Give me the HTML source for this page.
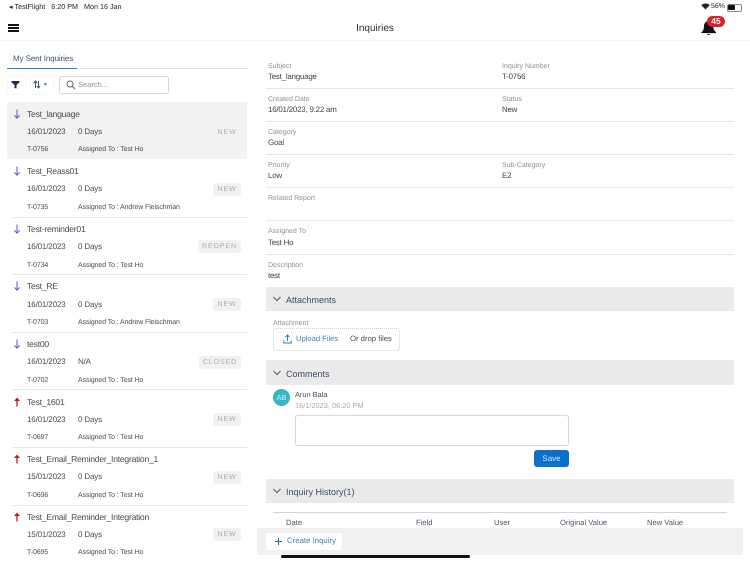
<!DOCTYPE html>
<html><head><meta charset="utf-8"><style>
html,body{margin:0;padding:0;background:#fff}
#p{position:relative;width:750px;height:562px;overflow:hidden;background:#fff;font-family:"Liberation Sans",sans-serif;color:#333;filter:blur(.3px);text-rendering:geometricPrecision}
#p div,#p span.a{position:absolute;white-space:nowrap}
.t{font-size:8.6px;line-height:12px;color:#4a4a4a;letter-spacing:-.24px}
.s{font-size:7px;line-height:10px;color:#4a4a4a;letter-spacing:-.1px;margin-top:.7px}
.d{font-size:8px;line-height:12px;color:#4a4a4a;letter-spacing:-.16px}
.l{font-size:7px;line-height:10px;color:#8e8e8e;margin-top:.5px}
.v{font-size:7.9px;line-height:12px;color:#444;letter-spacing:-.2px;margin-top:-.5px}
.hr{height:1px;background:#e6e6e6}
.b{background:#f1f1f1;border-radius:3px;height:13px;line-height:13px;font-size:7px;letter-spacing:.9px;color:#aaa;text-align:center}
.sec{left:266px;width:468px;background:#eaeaea}
.st{left:286px;font-size:9px;line-height:14px;color:#3a4a63;margin-top:1px}
.th{font-size:7.6px;line-height:10px;color:#4a5568;top:518px}
</style></head><body><div id="p">
<!-- status bar -->
<div style="left:9px;top:2px;font-size:7.2px;line-height:10px;color:#222">◂ TestFlight&nbsp;&nbsp; 6:20 PM&nbsp;&nbsp; Mon 16 Jan</div>
<svg style="position:absolute;left:701px;top:3px" width="9" height="7" viewBox="0 0 9 7"><path d="M4.5 6.5 L0.3 2.2 C2.6 0 6.4 0 8.7 2.2Z" fill="#222"/></svg>
<div style="left:711px;top:2px;font-size:7px;line-height:10px;color:#222">56%</div>
<div style="left:727px;top:4px;width:13px;height:6px;border:.5px solid #888;border-radius:2px"></div>
<div style="left:728px;top:5px;width:7px;height:5px;background:#111;border-radius:1px"></div>
<!-- header -->
<div style="left:8px;top:24px;width:11px;height:1.5px;background:#111"></div>
<div style="left:8px;top:27px;width:11px;height:1.5px;background:#111"></div>
<div style="left:8px;top:30px;width:11px;height:1.5px;background:#111"></div>
<div style="left:0;width:750px;top:27px;line-height:0;text-align:center"><span style="font-size:10px;line-height:0;color:#2e2e2e;">Inquiries</span></div>
<div style="left:0;top:40px;width:750px;height:1px;background:#f0f0f0"></div>
<svg style="position:absolute;left:700px;top:20px" width="18" height="16" viewBox="0 0 18 17"><path d="M1 13 C3.5 11 3.5 9 3.6 6.5 C3.8 3 6 1 8.5 1 C11 1 13.3 3 13.5 6.5 C13.6 9 14 11 16.5 13 L16.5 14 L1 14Z M6.8 15 H10.2 C10 16.4 7 16.4 6.8 15Z" fill="#111"/></svg>
<div style="left:707px;top:15.5px;width:18px;height:11.5px;border-radius:6px;background:#df1f26;color:#fff;font-size:8.5px;line-height:11.5px;font-weight:bold;text-align:center">45</div>
<!-- tabs -->
<div style="left:13px;top:52.5px;font-size:8px;line-height:12px;color:#3f5170;letter-spacing:-.1px">My Sent Inquiries</div>
<div style="left:7px;top:68px;width:241px;height:1px;background:#e4e4e4"></div>
<div style="left:7px;top:67.5px;width:70px;height:1.5px;background:#2f86c5"></div>
<!-- toolbar -->
<div style="left:7px;top:76px;width:17px;height:17px;border:.5px solid #f8f8f8;border-radius:2px"></div>
<div style="left:29px;top:76px;width:23px;height:17px;border:.5px solid #f8f8f8;border-radius:2px"></div>
<svg style="position:absolute;left:11px;top:80px" width="9" height="9" viewBox="0 0 9 9"><path d="M.5 1H8.5V2.2L5.5 5V8.5L3.5 8V5L.5 2.2Z" fill="#1f2f48"/></svg>
<svg style="position:absolute;left:33px;top:80px" width="14" height="9" viewBox="0 0 14 9"><path d="M2.5 8V1.5M.8 3L2.5 1L4.2 3M5.5 1V7.5M3.9 6L5.5 8L7.1 6" stroke="#3f5170" stroke-width="1" fill="none"/><path d="M10.5 3.5H14L12.2 5.5Z" fill="#3f5170"/></svg>
<div style="left:59px;top:76px;width:108px;height:16px;border:1px solid #d8d8d8;border-radius:3px"></div>
<svg style="position:absolute;left:66px;top:80px" width="10" height="10" viewBox="0 0 10 10"><circle cx="4" cy="4" r="3" stroke="#666" fill="none"/><path d="M6.2 6.2L9 9" stroke="#666" stroke-width="1.1"/></svg>
<div style="left:78px;top:79px;font-size:7.5px;line-height:11px;color:#8c8c8c">Search...</div>
<!-- list -->
<div style="left:7px;top:102px;width:240px;height:57px;background:#f2f2f2"></div>

<svg width="0" height="0" style="position:absolute"><defs><symbol id="dn" viewBox="0 0 8 10"><path d="M4 .5V9M1.4 6.4L4 9.2L6.6 6.4" stroke="#5b57c9" stroke-width="1" fill="none"/></symbol><symbol id="up" viewBox="0 0 8 10"><path d="M4 9.5V1.5" stroke="#c11920" stroke-width="1.3" fill="none"/><path d="M1 4L4 .6L7 4Z" fill="#c11920"/></symbol></defs></svg>

<svg style="position:absolute;left:13px;top:108.5px" width="8" height="10"><use href="#dn"/></svg>
<div class="t" style="left:27px;top:108px">Test_language</div>
<div class="d" style="left:27px;top:126px">16/01/2023</div><div class="d" style="left:78px;top:126px">0 Days</div>
<div class="b" style="left:213px;top:125.5px;width:28px;background:none">NEW</div>
<div class="s" style="left:27px;top:144px">T-0756</div><div class="s" style="left:78px;top:144px">Assigned To : Test Ho</div>

<svg style="position:absolute;left:13px;top:166px" width="8" height="10"><use href="#dn"/></svg>
<div class="t" style="left:27px;top:165px">Test_Reass01</div>
<div class="d" style="left:27px;top:183px">16/01/2023</div><div class="d" style="left:78px;top:183px">0 Days</div>
<div class="b" style="left:213px;top:183px;width:28px">NEW</div>
<div class="s" style="left:27px;top:202px">T-0735</div><div class="s" style="left:78px;top:202px">Assigned To : Andrew Fleischman</div>
<div class="hr" style="left:12px;top:217px;width:235px"></div>

<svg style="position:absolute;left:13px;top:224px" width="8" height="10"><use href="#dn"/></svg>
<div class="t" style="left:27px;top:223px">Test-reminder01</div>
<div class="d" style="left:27px;top:241px">16/01/2023</div><div class="d" style="left:78px;top:241px">0 Days</div>
<div class="b" style="left:198px;top:240px;width:43px">REOPEN</div>
<div class="s" style="left:27px;top:260px">T-0734</div><div class="s" style="left:78px;top:260px">Assigned To : Test Ho</div>
<div class="hr" style="left:12px;top:274px;width:235px"></div>

<svg style="position:absolute;left:13px;top:281px" width="8" height="10"><use href="#dn"/></svg>
<div class="t" style="left:27px;top:280px">Test_RE</div>
<div class="d" style="left:27px;top:299px">16/01/2023</div><div class="d" style="left:78px;top:299px">0 Days</div>
<div class="b" style="left:213px;top:298px;width:28px">NEW</div>
<div class="s" style="left:27px;top:317px">T-0703</div><div class="s" style="left:78px;top:317px">Assigned To : Andrew Fleischman</div>
<div class="hr" style="left:12px;top:332px;width:235px"></div>

<svg style="position:absolute;left:13px;top:339px" width="8" height="10"><use href="#dn"/></svg>
<div class="t" style="left:27px;top:338px">test00</div>
<div class="d" style="left:27px;top:356px">16/01/2023</div><div class="d" style="left:78px;top:356px">N/A</div>
<div class="b" style="left:199px;top:356px;width:42px">CLOSED</div>
<div class="s" style="left:27px;top:375px">T-0702</div><div class="s" style="left:78px;top:375px">Assigned To : Test Ho</div>
<div class="hr" style="left:12px;top:389px;width:235px"></div>

<svg style="position:absolute;left:13px;top:397px" width="8" height="10"><use href="#up"/></svg>
<div class="t" style="left:27px;top:396px">Test_1601</div>
<div class="d" style="left:27px;top:414px">16/01/2023</div><div class="d" style="left:78px;top:414px">0 Days</div>
<div class="b" style="left:213px;top:413px;width:28px">NEW</div>
<div class="s" style="left:27px;top:432px">T-0697</div><div class="s" style="left:78px;top:432px">Assigned To : Test Ho</div>
<div class="hr" style="left:12px;top:447px;width:235px"></div>

<svg style="position:absolute;left:13px;top:454px" width="8" height="10"><use href="#up"/></svg>
<div class="t" style="left:27px;top:453px">Test_Email_Reminder_Integration_1</div>
<div class="d" style="left:27px;top:471px">15/01/2023</div><div class="d" style="left:78px;top:471px">0 Days</div>
<div class="b" style="left:213px;top:471px;width:28px">NEW</div>
<div class="s" style="left:27px;top:490px">T-0696</div><div class="s" style="left:78px;top:490px">Assigned To : Test Ho</div>
<div class="hr" style="left:12px;top:505px;width:235px"></div>

<svg style="position:absolute;left:13px;top:512px" width="8" height="10"><use href="#up"/></svg>
<div class="t" style="left:27px;top:511px">Test_Email_Reminder_Integration</div>
<div class="d" style="left:27px;top:529px">15/01/2023</div><div class="d" style="left:78px;top:529px">0 Days</div>
<div class="b" style="left:213px;top:528px;width:28px">NEW</div>
<div class="s" style="left:27px;top:547px">T-0695</div><div class="s" style="left:78px;top:547px">Assigned To : Test Ho</div>

<!-- details -->
<div class="l" style="left:268px;top:61px">Subject</div><div class="v" style="left:268px;top:71px">Test_language</div>
<div class="l" style="left:502px;top:61px">Inquiry Number</div><div class="v" style="left:502px;top:71px">T-0756</div>
<div class="hr" style="left:266px;top:88px;width:468px"></div>
<div class="l" style="left:268px;top:94px">Created Date</div><div class="v" style="left:268px;top:104px">16/01/2023, 9:22 am</div>
<div class="l" style="left:502px;top:94px">Status</div><div class="v" style="left:502px;top:104px">New</div>
<div class="hr" style="left:266px;top:121px;width:468px"></div>
<div class="l" style="left:268px;top:127px">Category</div><div class="v" style="left:268px;top:137px">Goal</div>
<div class="hr" style="left:266px;top:154px;width:468px"></div>
<div class="l" style="left:268px;top:160px">Priority</div><div class="v" style="left:268px;top:170px">Low</div>
<div class="l" style="left:502px;top:160px">Sub-Category</div><div class="v" style="left:502px;top:170px">E2</div>
<div class="hr" style="left:266px;top:187px;width:468px"></div>
<div class="l" style="left:268px;top:193px">Related Report</div>
<div class="hr" style="left:266px;top:220px;width:468px"></div>
<div class="l" style="left:268px;top:226px">Assigned To</div><div class="v" style="left:268px;top:237px">Test Ho</div>
<div class="hr" style="left:266px;top:254px;width:468px"></div>
<div class="l" style="left:268px;top:260px">Description</div><div class="v" style="left:268px;top:270px">test</div>

<!-- attachments -->
<div class="sec" style="top:287px;height:24px"></div>
<svg style="position:absolute;left:273px;top:296px" width="8" height="6" viewBox="0 0 8 6"><path d="M.5 1L4 4.6L7.5 1" stroke="#556" fill="none"/></svg>
<div class="st" style="top:291.5px">Attachments</div>
<div class="l" style="left:273px;top:318px">Attachment</div>
<div style="left:273px;top:328px;width:125px;height:21px;border:1px dotted #d0d0d0;border-radius:3px"></div>
<svg style="position:absolute;left:283px;top:334px" width="9" height="10" viewBox="0 0 9 10"><path d="M4.5 7V1.2M2.3 3.2L4.5 1L6.7 3.2M.8 6.5V9H8.2V6.5" stroke="#2f7fb8" fill="none"/></svg>
<div style="left:296px;top:333px;font-size:7.6px;line-height:12px;color:#3f86bb">Upload Files</div>
<div style="left:350px;top:333px;font-size:7.7px;line-height:12px;color:#3f4a5a">Or drop files</div>

<!-- comments -->
<div class="sec" style="top:360px;height:25px"></div>
<svg style="position:absolute;left:273px;top:370px" width="8" height="6" viewBox="0 0 8 6"><path d="M.5 1L4 4.6L7.5 1" stroke="#556" fill="none"/></svg>
<div class="st" style="top:365.5px">Comments</div>
<div style="left:273px;top:389px;width:17px;height:17px;border-radius:50%;background:#35b8c4;color:#d7f2f4;font-size:7.5px;line-height:17px;text-align:center">AB</div>
<div style="left:295px;top:389px;font-size:7.4px;line-height:11px;color:#3f4a60">Arun Bala</div>
<div style="left:295px;top:400px;font-size:7.4px;line-height:11px;color:#aaa">16/1/2023, 06:20 PM</div>
<div style="left:295px;top:415px;width:272px;height:29px;border:1px solid #d8d8d8;border-radius:3px"></div>
<div style="left:534px;top:450px;width:35px;height:17px;background:#0a70c9;border-radius:3px;color:#dbe9f5;font-size:8px;line-height:17px;text-align:center">Save</div>

<!-- history -->
<div class="sec" style="top:479px;height:24px"></div>
<svg style="position:absolute;left:273px;top:488px" width="8" height="6" viewBox="0 0 8 6"><path d="M.5 1L4 4.6L7.5 1" stroke="#556" fill="none"/></svg>
<div class="st" style="top:483.5px">Inquiry History(1)</div>
<div style="left:273px;top:512px;width:454px;height:1px;background:#d4d4d4"></div>
<div class="th" style="left:286px">Date</div>
<div class="th" style="left:416px">Field</div>
<div class="th" style="left:494px">User</div>
<div class="th" style="left:560px">Original Value</div>
<div class="th" style="left:647px">New Value</div>

<!-- footer -->
<div style="left:257px;top:528px;width:486px;height:27px;background:#f1f1f1"></div>
<div style="left:266px;top:533px;width:76px;height:17px;background:#fff;border-radius:2px"></div>
<svg style="position:absolute;left:274px;top:537px" width="9" height="9" viewBox="0 0 9 9"><path d="M4.5 1V8M1 4.5H8" stroke="#2f6f9f" stroke-width="1"/></svg>
<div style="left:287px;top:535px;font-size:7.8px;line-height:12px;color:#3f7fa8">Create Inquiry</div>
<div style="left:281px;top:555px;width:189px;height:3px;background:#111;border-radius:2px"></div>
</div></body></html>
